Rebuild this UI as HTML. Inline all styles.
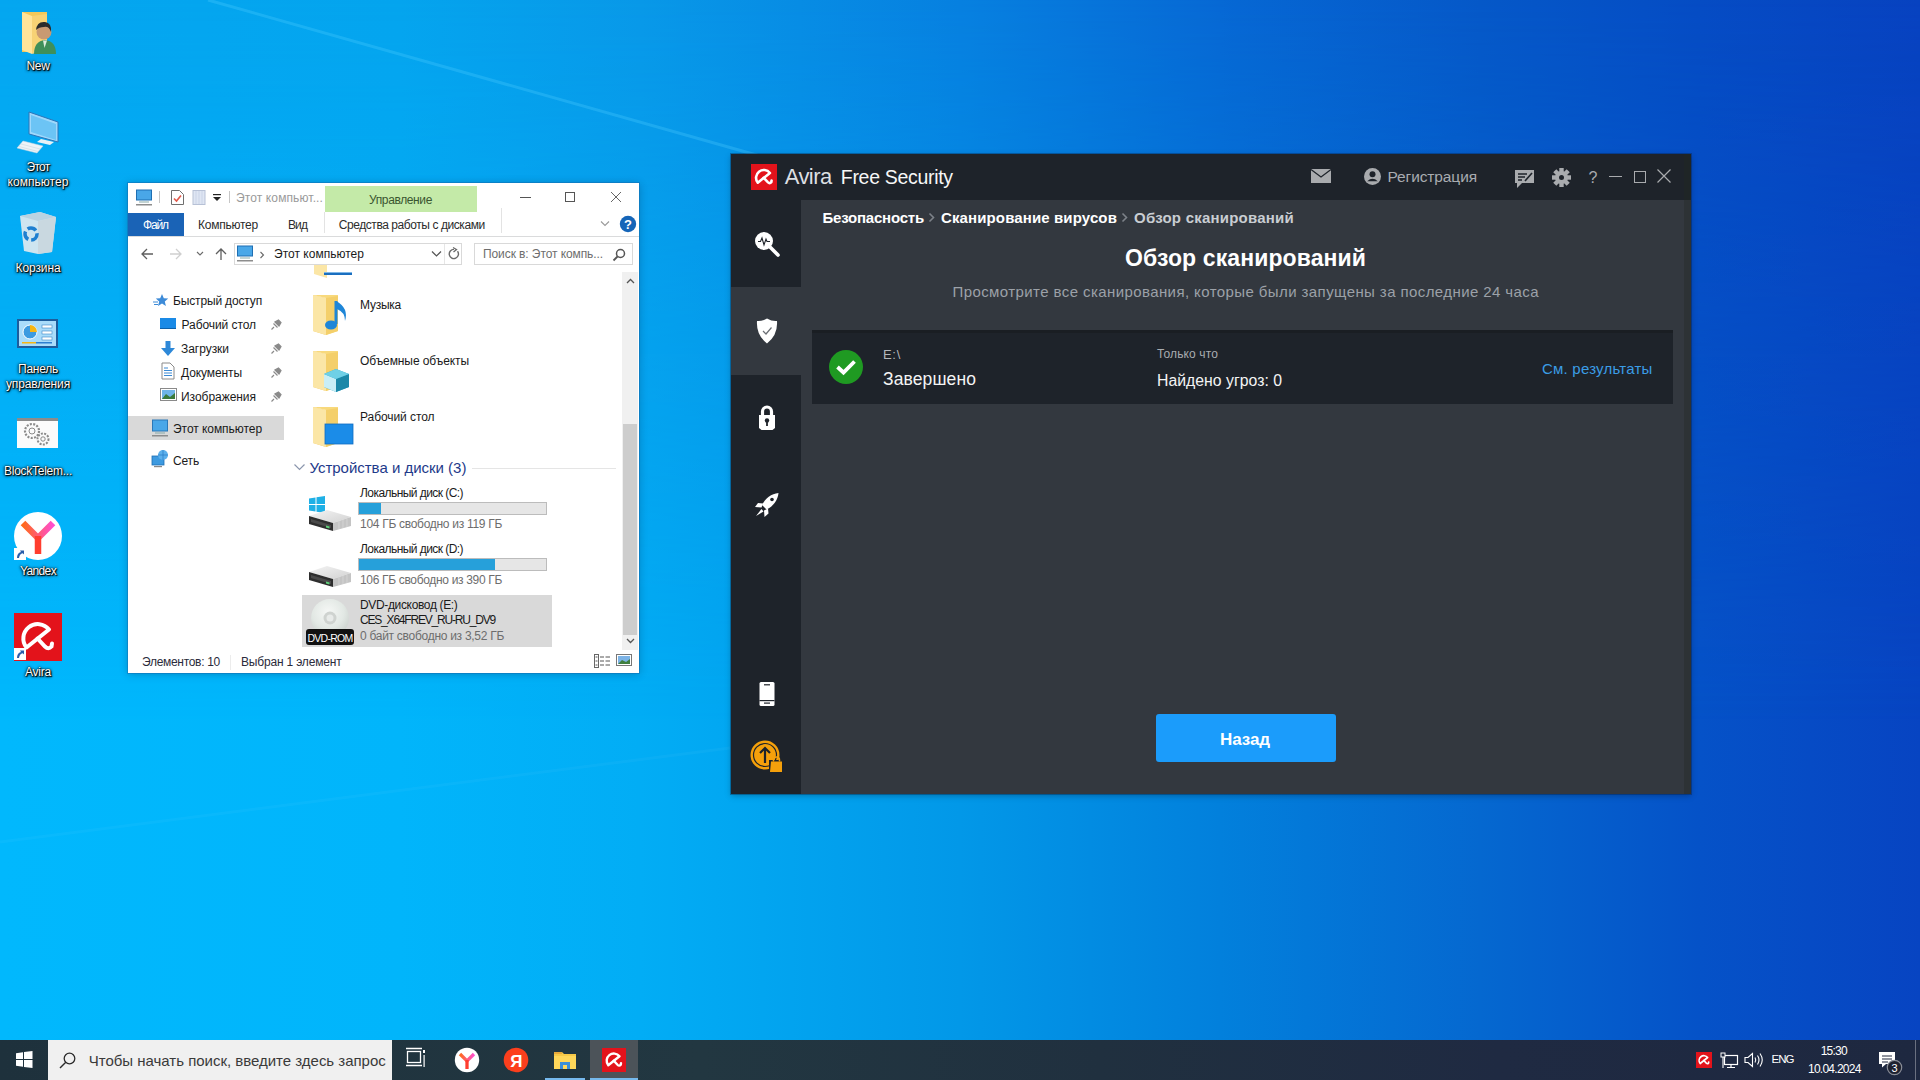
<!DOCTYPE html>
<html><head><meta charset="utf-8">
<style>
*{margin:0;padding:0;box-sizing:border-box}
html,body{width:1920px;height:1080px;overflow:hidden}
body{position:relative;font-family:"Liberation Sans",sans-serif;background:#03a8ef}
.a{position:absolute}
.t{position:absolute;white-space:pre;line-height:1;font-family:"Liberation Sans",sans-serif}
svg.a{overflow:visible}
#bg{left:0;top:0;width:1920px;height:1080px;
background:linear-gradient(90deg,#01b8fd 0px,#01b5fb 400px,#02adf5 640px,#0298e8 960px,#0280dc 1220px,#0568d0 1480px,#0552c8 1700px,#0744c2 1920px)}
#bgtop{left:0;top:0;width:1920px;height:1080px;
background:linear-gradient(90deg,#04a6f0 0px,#04a4ee 400px,#0898e8 640px,#0680e0 960px,#0668d4 1220px,#0558c8 1480px,#054cc4 1700px,#0742c0 1920px);
-webkit-mask-image:linear-gradient(180deg,#000 0px,rgba(0,0,0,.8) 140px,rgba(0,0,0,.3) 500px,rgba(0,0,0,0) 720px);mask-image:linear-gradient(180deg,#000 0px,rgba(0,0,0,.8) 140px,rgba(0,0,0,.3) 500px,rgba(0,0,0,0) 720px)}
</style></head><body>
<div id="bg" class="a"></div>
<div id="bgtop" class="a"></div>
<svg class="a" style="left:0;top:0" width="1920" height="1080"><line x1="208" y1="0" x2="760" y2="156" stroke="rgba(80,205,255,0.30)" stroke-width="3"/><line x1="0" y1="842" x2="730" y2="748" stroke="rgba(255,255,255,0.035)" stroke-width="3"/></svg>
<svg class="a" style="left:20px;top:10px;" width="40" height="46" viewBox="0 0 40 46">
<path d="M2 2 L27 2 L27 42 L2 42 Z" fill="#f3c85a"/>
<path d="M2 2 L12 6 L12 44 L2 40 Z" fill="#ffe49a"/>
<path d="M12 6 L27 4 L27 40 L12 44 Z" fill="#f7d275"/>
<path d="M14 44 Q14 31 25 30 Q36 31 36 44Z" fill="#3f8f5a"/>
<circle cx="24" cy="22" r="7.5" fill="#c99a72"/>
<path d="M16 20 Q17 11 25 12 Q32 13 31 22 Q29 16 24 17 Q19 17 16 20Z" fill="#2b2b2b"/>
<path d="M23 30.5 L24.5 38 L27 30.5Z" fill="#dfeee0"/>
</svg>
<div class="t" style="left:26.50px;top:60.00px;font-size:12px;color:#fff;letter-spacing:-0.339px;text-shadow:0 0 1px #000,1px 1px 1px #000,0 0 3px rgba(0,0,0,.8),0 1px 3px rgba(0,0,0,.8)">New</div>
<svg class="a" style="left:14px;top:110px;" width="48" height="46" viewBox="0 0 48 46">
<path d="M15 2 L44 12 L44 32 L15 24 Z" fill="#9fd8fb" stroke="#2c74b8" stroke-width="1"/>
<path d="M17 5 L42 14 L42 30 L17 22 Z" fill="#6cc4f5"/>
<path d="M27 29 L40 32 L36 35 L23 32 Z" fill="#e9f1f6"/>
<path d="M9 31 L29 36 L23 43 L3 38 Z" fill="#eef3f7" stroke="#c8d6e0" stroke-width=".5"/><path d="M7 34 L26 39 M5 36.5 L24 41.5" stroke="#c9d6df" stroke-width=".6"/>
</svg>
<div class="t" style="left:26.50px;top:161.00px;font-size:12px;color:#fff;letter-spacing:-0.727px;text-shadow:0 0 1px #000,1px 1px 1px #000,0 0 3px rgba(0,0,0,.8),0 1px 3px rgba(0,0,0,.8)">Этот</div>
<div class="t" style="left:7.50px;top:176.00px;font-size:12px;color:#fff;letter-spacing:0.054px;text-shadow:0 0 1px #000,1px 1px 1px #000,0 0 3px rgba(0,0,0,.8),0 1px 3px rgba(0,0,0,.8)">компьютер</div>
<svg class="a" style="left:18px;top:210px;" width="40" height="46" viewBox="0 0 40 46">
<path d="M2 6 L22 2 L38 7 L34 42 L20 44 L6 41 Z" fill="#dfe9ef" opacity=".92"/>
<path d="M2 6 L22 2 L38 7 L20 11 Z" fill="#b9d3e2"/>
<path d="M20 11 L38 7 L34 42 L20 44 Z" fill="#c9d8e0"/>
<circle cx="13" cy="24" r="6" fill="none" stroke="#1e7fd0" stroke-width="3.5" stroke-dasharray="9 3"/>
</svg>
<div class="t" style="left:15.50px;top:262.00px;font-size:12px;color:#fff;letter-spacing:-0.103px;text-shadow:0 0 1px #000,1px 1px 1px #000,0 0 3px rgba(0,0,0,.8),0 1px 3px rgba(0,0,0,.8)">Корзина</div>
<svg class="a" style="left:16px;top:318px;" width="44" height="32" viewBox="0 0 44 32">
<rect x="1" y="1" width="41" height="29" fill="#1d5d9c"/>
<rect x="3" y="3" width="37" height="25" fill="#a9dcfa"/>
<circle cx="14" cy="14" r="7" fill="#3c9be0" stroke="#fff" stroke-width="1"/>
<path d="M14 7 A7 7 0 0 1 21 14 L14 14Z" fill="#f6b614"/>
<rect x="26" y="7" width="10" height="3" fill="#fff" stroke="#3b86c6" stroke-width=".6"/>
<rect x="26" y="13" width="10" height="3" fill="#fff" stroke="#3b86c6" stroke-width=".6"/>
<rect x="26" y="19" width="10" height="3" fill="#fff" stroke="#3b86c6" stroke-width=".6"/>
<rect x="6" y="24" width="14" height="1.5" fill="#f6b614"/><rect x="20" y="24" width="16" height="1.5" fill="#2d7fd0"/>
</svg>
<div class="t" style="left:18.00px;top:363.00px;font-size:12px;color:#fff;letter-spacing:-0.245px;text-shadow:0 0 1px #000,1px 1px 1px #000,0 0 3px rgba(0,0,0,.8),0 1px 3px rgba(0,0,0,.8)">Панель</div>
<div class="t" style="left:6.00px;top:378.00px;font-size:12px;color:#fff;letter-spacing:-0.145px;text-shadow:0 0 1px #000,1px 1px 1px #000,0 0 3px rgba(0,0,0,.8),0 1px 3px rgba(0,0,0,.8)">управления</div>
<svg class="a" style="left:16px;top:418px;" width="43" height="31" viewBox="0 0 43 31">
<rect x="1" y="0" width="41" height="30" fill="#fbfbfb"/>
<rect x="1" y="0" width="41" height="3" fill="#8c8c8c"/>
<circle cx="16" cy="13" r="7" fill="none" stroke="#8a8a8a" stroke-width="2.2" stroke-dasharray="2 1.4"/>
<circle cx="16" cy="13" r="3" fill="none" stroke="#8a8a8a" stroke-width="1"/>
<circle cx="27" cy="21" r="5.5" fill="none" stroke="#8a8a8a" stroke-width="2" stroke-dasharray="2 1.3"/>
<circle cx="27" cy="21" r="2.2" fill="none" stroke="#8a8a8a" stroke-width="1"/>
</svg>
<div class="t" style="left:4.00px;top:465.00px;font-size:12px;color:#fff;letter-spacing:-0.258px;text-shadow:0 0 1px #000,1px 1px 1px #000,0 0 3px rgba(0,0,0,.8),0 1px 3px rgba(0,0,0,.8)">BlockTelem...</div>
<svg class="a" style="left:13px;top:511px;" width="50" height="50" viewBox="0 0 50 50">
<circle cx="25" cy="25" r="24" fill="#fff"/>
<defs><linearGradient id="yg" x1="0" x2="1"><stop offset="0" stop-color="#ff6a1a"/><stop offset="1" stop-color="#ff4fd0"/></linearGradient></defs>
<path d="M10 12 L25 27 L40 12" fill="none" stroke="url(#yg)" stroke-width="6.5" stroke-linecap="butt"/>
<path d="M25 25 L25 43" stroke="#ff3d2e" stroke-width="6.5"/>
</svg>
<svg class="a" style="left:14px;top:548px;" width="12" height="12" viewBox="0 0 12 12"><rect x="0" y="0" width="12" height="12" fill="#fff"/><path d="M3 10 Q3 5 7 4 L6 2.5 L10 2.5 L10 6.5 L8.7 5.2 Q5.5 6 5 10Z" fill="#2a5daa"/></svg>
<div class="t" style="left:20.00px;top:565.00px;font-size:12px;color:#fff;letter-spacing:-0.635px;text-shadow:0 0 1px #000,1px 1px 1px #000,0 0 3px rgba(0,0,0,.8),0 1px 3px rgba(0,0,0,.8)">Yandex</div>
<svg class="a" style="left:14px;top:613px;" width="48" height="48" viewBox="0 0 48 48"><rect width="48" height="48" fill="#e3131b"/>
<path d="M12.5 34.5 A14.3 14.3 0 0 1 35 16.5 Z" fill="none" stroke="#fff" stroke-width="4.00" stroke-linejoin="round"/>
<path d="M23.5 25.5 L31 33.5 Q34.5 37 37.5 33.5 L38 30.5" fill="none" stroke="#fff" stroke-width="4.00" stroke-linecap="round"/>
</svg>
<svg class="a" style="left:14px;top:648px;" width="12" height="12" viewBox="0 0 12 12"><rect x="0" y="0" width="12" height="12" fill="#fff"/><path d="M3 10 Q3 5 7 4 L6 2.5 L10 2.5 L10 6.5 L8.7 5.2 Q5.5 6 5 10Z" fill="#2a5daa"/></svg>
<div class="t" style="left:25.00px;top:666.00px;font-size:12px;color:#fff;letter-spacing:-0.225px;text-shadow:0 0 1px #000,1px 1px 1px #000,0 0 3px rgba(0,0,0,.8),0 1px 3px rgba(0,0,0,.8)">Avira</div>
<div class="a" style="left:128px;top:183px;width:511px;height:490px;background:#fff;box-shadow:0 1px 8px rgba(0,30,60,.3);outline:1px solid rgba(20,110,180,.5)"></div>
<svg class="a" style="left:136px;top:189px;" width="17" height="17" viewBox="0 0 17 17"><rect x="0.5" y="1" width="15" height="10" fill="#49a7e8" stroke="#1f6fb3" stroke-width="1"/><rect x="3" y="12.5" width="10" height="1" fill="#8aa"/><rect x="0" y="15" width="16" height="1.5" fill="#8d8d8d"/></svg>
<div class="a" style="left:159px;top:191px;width:1px;height:12px;background:#c6c6c6;"></div>
<svg class="a" style="left:170px;top:189px;" width="15" height="17" viewBox="0 0 15 17"><path d="M1.5 1.5 H9.5 L13.5 5.5 V15.5 H1.5Z" fill="#fff" stroke="#6f6f6f" stroke-width="1"/><path d="M4 9.5 L6.5 12 L11 6.5" fill="none" stroke="#e0584a" stroke-width="1.6"/></svg>
<svg class="a" style="left:192px;top:189px;" width="15" height="17" viewBox="0 0 15 17"><rect x="1" y="1.5" width="12" height="14" fill="#dfe6f3" stroke="#b7c1d6" stroke-width="1"/><path d="M4 2 V15 M7 2 V15 M10 2 V15" stroke="#c5cfe3" stroke-width=".8"/></svg>
<svg class="a" style="left:212px;top:193px;" width="10" height="10" viewBox="0 0 10 10"><rect x="1" y="1" width="8" height="1.2" fill="#222"/><path d="M1 4 H9 L5 8Z" fill="#222"/></svg>
<div class="a" style="left:229px;top:191px;width:1px;height:12px;background:#c6c6c6;"></div>
<div class="t" style="left:236.00px;top:192.00px;font-size:12px;color:#9a9a9a;letter-spacing:0.120px">Этот компьют...</div>
<div class="a" style="left:325px;top:186px;width:152px;height:26px;background:#c4eaa8;"></div>
<div class="t" style="left:369.00px;top:194.00px;font-size:12px;color:#3a5530;letter-spacing:-0.372px">Управление</div>
<div class="a" style="left:520px;top:197px;width:11px;height:1px;background:#555;"></div>
<div class="a" style="left:565px;top:192px;width:10px;height:10px;background:transparent;border:1px solid #555"></div>
<svg class="a" style="left:610px;top:191px;" width="12" height="12" viewBox="0 0 12 12"><path d="M1 1 L11 11 M11 1 L1 11" stroke="#666" stroke-width="1"/></svg>
<div class="a" style="left:128px;top:213px;width:56px;height:23px;background:#1a63b6;"></div>
<div class="t" style="left:143.00px;top:219.00px;font-size:12px;color:#fff;letter-spacing:-1.129px">Файл</div>
<div class="t" style="left:198.00px;top:219.00px;font-size:12px;color:#2c2c2c;letter-spacing:-0.234px">Компьютер</div>
<div class="t" style="left:288.00px;top:219.00px;font-size:12px;color:#2c2c2c;letter-spacing:-0.906px">Вид</div>
<div class="a" style="left:324px;top:212px;width:1px;height:21px;background:#e3e3e3;"></div>
<div class="t" style="left:338.75px;top:219.00px;font-size:12px;color:#2c2c2c;letter-spacing:-0.431px">Средства работы с дисками</div>
<div class="a" style="left:501px;top:208px;width:1px;height:25px;background:#e3e3e3;"></div>
<svg class="a" style="left:600px;top:220px;" width="10" height="7" viewBox="0 0 10 7"><path d="M1 1.5 L5 5.5 L9 1.5" fill="none" stroke="#9a9a9a" stroke-width="1.1"/></svg>
<svg class="a" style="left:619px;top:215px;" width="18" height="18" viewBox="0 0 18 18"><circle cx="9" cy="9" r="8.2" fill="#1565b8"/><text x="9" y="13.6" font-family="Liberation Sans" font-weight="bold" font-size="13" fill="#fff" text-anchor="middle">?</text></svg>
<div class="a" style="left:128px;top:236px;width:511px;height:1px;background:#dadbdc;"></div>
<svg class="a" style="left:140px;top:247px;" width="15" height="14" viewBox="0 0 15 14"><path d="M13 7 H2 M7 2 L2 7 L7 12" fill="none" stroke="#5f5f5f" stroke-width="1.3"/></svg>
<svg class="a" style="left:168px;top:247px;" width="15" height="14" viewBox="0 0 15 14"><path d="M2 7 H13 M8 2 L13 7 L8 12" fill="none" stroke="#cfcfcf" stroke-width="1.3"/></svg>
<svg class="a" style="left:196px;top:251px;" width="8" height="6" viewBox="0 0 8 6"><path d="M1 1 L4 4 L7 1" fill="none" stroke="#6a6a6a" stroke-width="1.1"/></svg>
<svg class="a" style="left:214px;top:247px;" width="14" height="14" viewBox="0 0 14 14"><path d="M7 13 V2 M2 7 L7 2 L12 7" fill="none" stroke="#5f5f5f" stroke-width="1.3"/></svg>
<div class="a" style="left:234px;top:243px;width:228px;height:22px;background:#fff;border:1px solid #d9d9d9"></div>
<div class="a" style="left:444px;top:244px;width:1px;height:20px;background:#e6e6e6;"></div>
<svg class="a" style="left:237px;top:245px;" width="17" height="17" viewBox="0 0 17 17"><rect x="0.5" y="1" width="15" height="10" fill="#49a7e8" stroke="#1f6fb3" stroke-width="1"/><rect x="3" y="12.5" width="10" height="1" fill="#8aa"/><rect x="0" y="15" width="16" height="1.5" fill="#8d8d8d"/></svg>
<svg class="a" style="left:259px;top:251px;" width="7" height="8" viewBox="0 0 7 8"><path d="M1.5 1 L4.5 4 L1.5 7" fill="none" stroke="#6a6a6a" stroke-width="1.1"/></svg>
<div class="t" style="left:274.00px;top:248.00px;font-size:12px;color:#1a1a1a;letter-spacing:0.019px">Этот компьютер</div>
<svg class="a" style="left:431px;top:250px;" width="11" height="8" viewBox="0 0 11 8"><path d="M1 1.5 L5.5 6 L10 1.5" fill="none" stroke="#555" stroke-width="1.2"/></svg>
<svg class="a" style="left:447px;top:247px;" width="14" height="14" viewBox="0 0 14 14"><path d="M10.5 4.2 A4.6 4.6 0 1 1 7 2.4" fill="none" stroke="#6a6a6a" stroke-width="1.4"/><path d="M6 0.5 L9.5 2.5 L6.5 5" fill="none" stroke="#6a6a6a" stroke-width="1.3"/></svg>
<div class="a" style="left:474px;top:243px;width:159px;height:22px;background:#fff;border:1px solid #d9d9d9"></div>
<div class="t" style="left:483.00px;top:248.00px;font-size:12px;color:#6d6d6d;letter-spacing:-0.087px">Поиск в: Этот компь...</div>
<svg class="a" style="left:612px;top:248px;" width="14" height="14" viewBox="0 0 14 14"><circle cx="8.5" cy="5.5" r="4" fill="none" stroke="#555" stroke-width="1.5"/><path d="M5.5 8.5 L1.5 12.5" stroke="#555" stroke-width="1.8"/></svg>
<svg class="a" style="left:153px;top:293px;" width="16" height="14" viewBox="0 0 16 14"><path d="M9 1 L10.8 5.3 L15.2 5.6 L11.8 8.5 L12.9 13 L9 10.5 L5 13 L6.2 8.5 L2.8 5.6 L7.2 5.3Z" fill="#3d8bd8"/><path d="M0 9 H5 M1 11.5 H5" stroke="#3d8bd8" stroke-width="1"/></svg>
<div class="t" style="left:173.00px;top:295.00px;font-size:12px;color:#1a1a1a;letter-spacing:-0.153px">Быстрый доступ</div>
<svg class="a" style="left:160px;top:318px;" width="17" height="12" viewBox="0 0 17 12"><rect x="0" y="0" width="16" height="11" fill="#1a8ae6"/><rect x="0" y="10" width="16" height="1" fill="#0d5fa8"/></svg>
<div class="t" style="left:181.50px;top:319.00px;font-size:12px;color:#1a1a1a;letter-spacing:-0.069px">Рабочий стол</div>
<svg class="a" style="left:160px;top:341px;" width="17" height="16" viewBox="0 0 17 16"><path d="M5.5 0 H10.5 V7 H15 L8 15 L1 7 H5.5Z" fill="#2d88d8"/></svg>
<div class="t" style="left:181.00px;top:343.00px;font-size:12px;color:#1a1a1a;letter-spacing:-0.037px">Загрузки</div>
<svg class="a" style="left:161px;top:362px;" width="14" height="18" viewBox="0 0 14 18"><path d="M1 1 H9 L13 5 V17 H1Z" fill="#fff" stroke="#8a8a8a" stroke-width="1"/><path d="M3 6 H7 M3 8.5 H11 M3 11 H11 M3 13.5 H11" stroke="#3c8ad4" stroke-width="1"/></svg>
<div class="t" style="left:181.00px;top:367.00px;font-size:12px;color:#1a1a1a;letter-spacing:-0.095px">Документы</div>
<svg class="a" style="left:160px;top:388px;" width="17" height="14" viewBox="0 0 17 14"><rect x="0.5" y="0.5" width="16" height="12" fill="#fff" stroke="#8a8a8a" stroke-width="1"/><rect x="2" y="2" width="13" height="9" fill="#6fb4e8"/><path d="M2 11 L6 6 L10 9 L15 5 V11Z" fill="#3b7a3b"/></svg>
<div class="t" style="left:181.00px;top:391.00px;font-size:12px;color:#1a1a1a;letter-spacing:-0.038px">Изображения</div>
<svg class="a" style="left:271px;top:318px;" width="12" height="12" viewBox="0 0 12 12"><path d="M3 9 L0.5 11.5 M2.5 5.5 L6.5 9.5 M4 4 L8 8 L10 4.5 L7.5 2Z" fill="#8a8a8a" stroke="#8a8a8a" stroke-width="1.2"/></svg>
<svg class="a" style="left:271px;top:342px;" width="12" height="12" viewBox="0 0 12 12"><path d="M3 9 L0.5 11.5 M2.5 5.5 L6.5 9.5 M4 4 L8 8 L10 4.5 L7.5 2Z" fill="#8a8a8a" stroke="#8a8a8a" stroke-width="1.2"/></svg>
<svg class="a" style="left:271px;top:366px;" width="12" height="12" viewBox="0 0 12 12"><path d="M3 9 L0.5 11.5 M2.5 5.5 L6.5 9.5 M4 4 L8 8 L10 4.5 L7.5 2Z" fill="#8a8a8a" stroke="#8a8a8a" stroke-width="1.2"/></svg>
<svg class="a" style="left:271px;top:390px;" width="12" height="12" viewBox="0 0 12 12"><path d="M3 9 L0.5 11.5 M2.5 5.5 L6.5 9.5 M4 4 L8 8 L10 4.5 L7.5 2Z" fill="#8a8a8a" stroke="#8a8a8a" stroke-width="1.2"/></svg>
<div class="a" style="left:128px;top:416px;width:156px;height:24px;background:#d9d9d9;"></div>
<svg class="a" style="left:152px;top:419px;" width="17" height="18" viewBox="0 0 17 18"><rect x="0.5" y="1" width="15" height="11" fill="#49a7e8" stroke="#2b78b8" stroke-width="1"/><rect x="3" y="13.5" width="10" height="1" fill="#8aa"/><rect x="0" y="16" width="16" height="1.5" fill="#8d8d8d"/></svg>
<div class="t" style="left:173.00px;top:423.00px;font-size:12px;color:#1a1a1a;letter-spacing:-0.052px">Этот компьютер</div>
<svg class="a" style="left:151px;top:449px;" width="18" height="19" viewBox="0 0 18 19"><rect x="1" y="7" width="12" height="9" fill="#3d9ae0" stroke="#1f6fb3" stroke-width=".8"/><circle cx="12" cy="6" r="5" fill="#5bb0ec"/><path d="M7 6 H17 M12 1 V11" stroke="#2a7cc6" stroke-width=".7"/><rect x="3" y="17" width="8" height="1.2" fill="#888"/></svg>
<div class="t" style="left:173.00px;top:455.00px;font-size:12px;color:#1a1a1a;letter-spacing:-0.176px">Сеть</div>
<svg class="a" style="left:313px;top:265px;" width="42" height="14" viewBox="0 0 42 14"><path d="M1 0 L14 0 L14 13 L1 9Z" fill="#fbe6a6"/><rect x="11" y="7" width="28" height="3" fill="#1a6fc0"/><rect x="11" y="7" width="28" height="1" fill="#7fb7e6"/></svg>
<svg class="a" style="left:312px;top:294px;" width="42" height="42" viewBox="0 0 42 42"><path d="M1 1 L14 4 L14 41 L1 37Z" fill="#f2cb63"/>
<path d="M1 1 H26 V37 L14 41 L14 4Z" fill="#f8d97c"/>
<path d="M14 4 L26 2 V37 L14 41Z" fill="#f4cf6a"/>
<path d="M1 1 L14 4 L14 41 L1 37Z" fill="#fbe6a6"/><path d="M24 7 V30" stroke="#1e86d8" stroke-width="3"/><ellipse cx="19" cy="31" rx="6" ry="4.5" fill="#1e86d8"/><path d="M24 7 Q37 14 33 27 Q33 18 25 15" fill="#1e86d8"/></svg>
<div class="t" style="left:360.00px;top:299.00px;font-size:12px;color:#1a1a1a;letter-spacing:-0.242px">Музыка</div>
<svg class="a" style="left:312px;top:350px;" width="42" height="42" viewBox="0 0 42 42"><path d="M1 1 L14 4 L14 41 L1 37Z" fill="#f2cb63"/>
<path d="M1 1 H26 V37 L14 41 L14 4Z" fill="#f8d97c"/>
<path d="M14 4 L26 2 V37 L14 41Z" fill="#f4cf6a"/>
<path d="M1 1 L14 4 L14 41 L1 37Z" fill="#fbe6a6"/><path d="M12 24 L24 19 L37 24 L37 37 L24 42 L12 37Z" fill="#2ea7c9"/><path d="M12 24 L24 29 L24 42 L12 37Z" fill="#c9eef6"/><path d="M24 29 L37 24 L37 37 L24 42Z" fill="#1c88a8"/><path d="M12 24 L24 19 L37 24 L24 29Z" fill="#6fd0e6"/></svg>
<div class="t" style="left:360.00px;top:355.00px;font-size:12px;color:#1a1a1a;letter-spacing:-0.083px">Объемные объекты</div>
<svg class="a" style="left:312px;top:406px;" width="42" height="42" viewBox="0 0 42 42"><path d="M1 1 L14 4 L14 41 L1 37Z" fill="#f2cb63"/>
<path d="M1 1 H26 V37 L14 41 L14 4Z" fill="#f8d97c"/>
<path d="M14 4 L26 2 V37 L14 41Z" fill="#f4cf6a"/>
<path d="M1 1 L14 4 L14 41 L1 37Z" fill="#fbe6a6"/><rect x="13" y="18" width="28" height="20" fill="#1b8ce8"/><rect x="13" y="18" width="28" height="20" fill="none" stroke="#0f6cc0" stroke-width=".8"/></svg>
<div class="t" style="left:360.00px;top:411.00px;font-size:12px;color:#1a1a1a;letter-spacing:-0.069px">Рабочий стол</div>
<svg class="a" style="left:293px;top:463px;" width="13" height="9" viewBox="0 0 13 9"><path d="M1.5 1.5 L6.5 6.5 L11.5 1.5" fill="none" stroke="#8b96ad" stroke-width="1.2"/></svg>
<div class="t" style="left:309.40px;top:460.00px;font-size:15px;color:#1e3a8a;letter-spacing:-0.012px">Устройства и диски (3)</div>
<div class="a" style="left:472px;top:468px;width:144px;height:1px;background:#e5e5e5;"></div>
<svg class="a" style="left:308px;top:496px;" width="18" height="18" viewBox="0 0 18 18"><path d="M1 2.5 L7.5 1.5 V8 H1Z M8.5 1.3 L17 0 V8 H8.5Z M1 9 H7.5 V15.5 L1 14.5Z M8.5 9 H17 V17 L8.5 15.7Z" fill="#1fb0e6"/></svg>
<svg class="a" style="left:308px;top:507px;" width="44" height="26" viewBox="0 0 44 26"><defs><linearGradient id="dtop507" x1="0" y1="0" x2="1" y2="1"><stop offset="0" stop-color="#f4f4f4"/><stop offset="1" stop-color="#d2d2d2"/></linearGradient></defs>
<path d="M1 9 L19 3 L43 10 L25 16Z" fill="url(#dtop507)"/>
<path d="M1 9 L25 16 L25 24 L1 17Z" fill="#2e2e2e"/>
<path d="M3 12 L23 18 L23 21 L3 15Z" fill="#4a4a4a"/>
<path d="M25 16 L43 10 L43 19 L25 24Z" fill="#c4c4c4"/>
<path d="M31 14 V22 M35 13 V21 M39 12 V20" stroke="#d8d8d8" stroke-width=".8"/>
<path d="M18 18.5 L21.5 19.5 L21.5 21.5 L18 20.5Z" fill="#5fd17a"/></svg>
<div class="t" style="left:360.00px;top:487.00px;font-size:12px;color:#1a1a1a;letter-spacing:-0.556px">Локальный диск (C:)</div>
<div class="a" style="left:358px;top:502px;width:189px;height:13px;background:#e6e6e6;box-shadow:inset 0 0 0 1px #bcbcbc"></div>
<div class="a" style="left:359px;top:503px;width:22px;height:11px;background:#26a0da;"></div>
<div class="t" style="left:360.00px;top:518.00px;font-size:12px;color:#6d6d6d;letter-spacing:-0.291px">104 ГБ свободно из 119 ГБ</div>
<svg class="a" style="left:308px;top:563px;" width="44" height="26" viewBox="0 0 44 26"><defs><linearGradient id="dtop563" x1="0" y1="0" x2="1" y2="1"><stop offset="0" stop-color="#f4f4f4"/><stop offset="1" stop-color="#d2d2d2"/></linearGradient></defs>
<path d="M1 9 L19 3 L43 10 L25 16Z" fill="url(#dtop563)"/>
<path d="M1 9 L25 16 L25 24 L1 17Z" fill="#2e2e2e"/>
<path d="M3 12 L23 18 L23 21 L3 15Z" fill="#4a4a4a"/>
<path d="M25 16 L43 10 L43 19 L25 24Z" fill="#c4c4c4"/>
<path d="M31 14 V22 M35 13 V21 M39 12 V20" stroke="#d8d8d8" stroke-width=".8"/>
<path d="M18 18.5 L21.5 19.5 L21.5 21.5 L18 20.5Z" fill="#5fd17a"/></svg>
<div class="t" style="left:360.00px;top:543.00px;font-size:12px;color:#1a1a1a;letter-spacing:-0.556px">Локальный диск (D:)</div>
<div class="a" style="left:358px;top:558px;width:189px;height:13px;background:#e6e6e6;box-shadow:inset 0 0 0 1px #bcbcbc"></div>
<div class="a" style="left:359px;top:559px;width:136px;height:11px;background:#26a0da;"></div>
<div class="t" style="left:360.00px;top:574.00px;font-size:12px;color:#6d6d6d;letter-spacing:-0.327px">106 ГБ свободно из 390 ГБ</div>
<div class="a" style="left:302px;top:595px;width:250px;height:52px;background:#d9d9d9;"></div>
<svg class="a" style="left:308px;top:598px;" width="46" height="40" viewBox="0 0 46 40"><defs><radialGradient id="dvd" cx=".45" cy=".35" r=".7"><stop offset="0" stop-color="#f6f8f6"/><stop offset=".6" stop-color="#e2e8e4"/><stop offset="1" stop-color="#c9cfcb"/></radialGradient></defs><circle cx="22" cy="20" r="19" fill="url(#dvd)"/><circle cx="22" cy="20" r="6.5" fill="#cfd3d0"/><circle cx="22" cy="20" r="3.5" fill="#e8ebe9"/></svg>
<div class="a" style="left:306px;top:629px;width:48px;height:16px;background:#111;border-radius:3px"></div>
<div class="t" style="left:307.50px;top:633.00px;font-size:10.5px;color:#fff;letter-spacing:-0.739px">DVD-ROM</div>
<div class="t" style="left:360.00px;top:599.00px;font-size:12px;color:#1a1a1a;letter-spacing:-0.348px">DVD-дисковод (E:)</div>
<div class="t" style="left:360.00px;top:614.00px;font-size:12px;color:#1a1a1a;letter-spacing:-1.193px">CES_X64FREV_RU-RU_DV9</div>
<div class="t" style="left:360.00px;top:630.00px;font-size:12px;color:#6d6d6d;letter-spacing:-0.279px">0 байт свободно из 3,52 ГБ</div>
<div class="a" style="left:622px;top:272px;width:16px;height:378px;background:#f0f0f0;"></div>
<svg class="a" style="left:626px;top:278px;" width="9" height="6" viewBox="0 0 9 6"><path d="M1 5 L4.5 1.5 L8 5" fill="none" stroke="#555" stroke-width="1.3"/></svg>
<div class="a" style="left:623px;top:424px;width:14px;height:211px;background:#cdcdcd;"></div>
<svg class="a" style="left:626px;top:638px;" width="9" height="6" viewBox="0 0 9 6"><path d="M1 1 L4.5 4.5 L8 1" fill="none" stroke="#555" stroke-width="1.3"/></svg>
<div class="t" style="left:142.00px;top:656.00px;font-size:12px;color:#2b2b3b;letter-spacing:-0.299px">Элементов: 10</div>
<div class="a" style="left:230px;top:655px;width:1px;height:15px;background:#ececec;"></div>
<div class="t" style="left:241.00px;top:656.00px;font-size:12px;color:#2b2b3b;letter-spacing:-0.182px">Выбран 1 элемент</div>
<svg class="a" style="left:593px;top:654px;" width="18" height="14" viewBox="0 0 18 14"><rect x="1.5" y="0.5" width="4" height="13" fill="none" stroke="#666" stroke-width="1"/><path d="M2.5 3 H4.5 M2.5 7 H4.5 M2.5 11 H4.5 M7 3 H11 M12.5 3 H17 M7 7 H11 M12.5 7 H17 M7 11 H11 M12.5 11 H17" stroke="#555" stroke-width="1"/></svg>
<svg class="a" style="left:616px;top:654px;" width="16" height="13" viewBox="0 0 16 13"><rect x="0.5" y="0.5" width="15" height="11" fill="#fff" stroke="#777" stroke-width="1"/><rect x="2" y="2" width="12" height="8" fill="#7cb3e6"/><path d="M2 10 L6 6 L10 8 L14 5 V10Z" fill="#3f7f3f"/></svg>
<div class="a" style="left:731px;top:154px;width:960px;height:640px;background:#1e232a;box-shadow:0 0 0 1px rgba(10,30,60,.35),0 2px 6px rgba(0,0,0,.25)"></div>
<div class="a" style="left:801px;top:200px;width:890px;height:594px;background:#33383f;"></div>
<div class="a" style="left:1684px;top:200px;width:7px;height:594px;background:#2d3235;"></div>
<div class="a" style="left:1684px;top:154px;width:7px;height:46px;background:#1f2526;"></div>
<div class="a" style="left:731px;top:287px;width:70px;height:88px;background:#33383f;"></div>
<svg class="a" style="left:751px;top:164px;" width="26" height="26" viewBox="0 0 48 48"><rect width="48" height="48" fill="#e3131b"/>
<path d="M12.5 34.5 A14.3 14.3 0 0 1 35 16.5 Z" fill="none" stroke="#fff" stroke-width="4.80" stroke-linejoin="round"/>
<path d="M23.5 25.5 L31 33.5 Q34.5 37 37.5 33.5 L38 30.5" fill="none" stroke="#fff" stroke-width="4.80" stroke-linecap="round"/>
</svg>
<div class="t" style="left:784.70px;top:166.00px;font-size:22px;color:#dcdfe2;letter-spacing:-0.547px;font-weight:300">Avira</div>
<div class="t" style="left:840.80px;top:168.00px;font-size:19.5px;color:#f7f7f7;letter-spacing:-0.304px">Free Security</div>
<svg class="a" style="left:1310px;top:168px;" width="22" height="16" viewBox="0 0 22 16"><rect x="1" y="1" width="20" height="14" fill="#a9abae"/><path d="M1 1.5 L11 9 L21 1.5" fill="none" stroke="#1e232a" stroke-width="1.2"/></svg>
<svg class="a" style="left:1363px;top:167px;" width="19" height="19" viewBox="0 0 19 19"><circle cx="9.5" cy="9.5" r="8.5" fill="#a9abae"/><circle cx="9.5" cy="7.3" r="3" fill="#1e232a"/><path d="M4.2 14.2 Q9.5 9.5 14.8 14.2 Z" fill="#1e232a"/></svg>
<div class="t" style="left:1387.50px;top:169.00px;font-size:15.5px;color:#a9acb1;letter-spacing:-0.101px">Регистрация</div>
<svg class="a" style="left:1514px;top:169px;" width="21" height="20" viewBox="0 0 21 20"><path d="M1 1 H20 V14 H8 L3 19 V14 H1Z" fill="#a9abae"/><path d="M4 5 H13 M4 8 H11 M4 11 H8" stroke="#1e232a" stroke-width="1.3"/><path d="M11 12 L18 4" stroke="#1e232a" stroke-width="1.6"/></svg>
<svg class="a" style="left:1551px;top:167px;" width="21" height="21" viewBox="0 0 21 21"><g transform="translate(10.5 10.5)" fill="#a9abae"><circle r="6.5"/><rect x="-2.2" y="-9.5" width="4.4" height="5" transform="rotate(0)"/><rect x="-2.2" y="-9.5" width="4.4" height="5" transform="rotate(45)"/><rect x="-2.2" y="-9.5" width="4.4" height="5" transform="rotate(90)"/><rect x="-2.2" y="-9.5" width="4.4" height="5" transform="rotate(135)"/><rect x="-2.2" y="-9.5" width="4.4" height="5" transform="rotate(180)"/><rect x="-2.2" y="-9.5" width="4.4" height="5" transform="rotate(225)"/><rect x="-2.2" y="-9.5" width="4.4" height="5" transform="rotate(270)"/><rect x="-2.2" y="-9.5" width="4.4" height="5" transform="rotate(315)"/><circle r="2.5" fill="#1e232a"/></g></svg>
<div class="t" style="left:1588.50px;top:169.50px;font-size:16px;color:#a9abae">?</div>
<div class="a" style="left:1609px;top:176px;width:13px;height:1px;background:#a9abae;"></div>
<div class="a" style="left:1634px;top:171px;width:12px;height:12px;background:transparent;border:1.2px solid #a9abae"></div>
<svg class="a" style="left:1656px;top:168px;" width="16" height="16" viewBox="0 0 16 16"><path d="M1.5 1.5 L14.5 14.5 M14.5 1.5 L1.5 14.5" stroke="#a9abae" stroke-width="1.2"/></svg>
<svg class="a" style="left:753px;top:230px;" width="28" height="28" viewBox="0 0 28 28"><circle cx="11" cy="11" r="9" fill="#fff"/><path d="M17 17 L25 25" stroke="#fff" stroke-width="3.6" stroke-linecap="round"/><path d="M5 11.5 H7.5 L9 8 L11 15 L13 9 L14 11.5 H17" fill="none" stroke="#1e232a" stroke-width="1.1"/></svg>
<svg class="a" style="left:755px;top:317px;" width="24" height="28" viewBox="0 0 24 28"><path d="M12 1.5 Q17 4.5 22 4 Q23 18 12 26.5 Q1 18 2 4 Q7 4.5 12 1.5Z" fill="#fff"/><path d="M8 14 L11 17 L16.5 10.5" fill="none" stroke="#6b6f74" stroke-width="1.2"/></svg>
<svg class="a" style="left:757px;top:404px;" width="20" height="28" viewBox="0 0 20 28"><path d="M5.5 11 V7.5 A4.5 4.5 0 0 1 14.5 7.5 V11" fill="none" stroke="#fff" stroke-width="3.2"/><path d="M2 11 H18 V24 L15.5 26 H4.5 L2 24Z" fill="#fff"/><circle cx="10" cy="16.5" r="2.2" fill="#1e232a"/><rect x="9.1" y="17" width="1.8" height="5" fill="#1e232a"/></svg>
<svg class="a" style="left:754px;top:491px;" width="26" height="27" viewBox="0 0 26 27"><path d="M24.5 2 C17.5 2.5 11 7.5 8 14 L12.5 18.5 C19 15.5 24 9 24.5 2Z" fill="#fff"/><path d="M9 12.5 L4 12 L1 16 L7.5 16.5Z M14 17.5 L14.5 22.5 L10.5 26 L10 19.5Z" fill="#fff"/><path d="M7.5 18 L2 25 L9.5 20.5Z" fill="#fff"/><circle cx="18" cy="8.5" r="1.8" fill="#1e232a"/></svg>
<svg class="a" style="left:758px;top:681px;" width="18" height="26" viewBox="0 0 18 26"><rect x="1.5" y="1" width="15" height="24" rx="1.5" fill="#fff"/><rect x="6" y="3.2" width="6" height="1.2" fill="#1e232a"/><rect x="1.5" y="19" width="15" height="1.2" fill="#1e232a"/><rect x="6" y="21.5" width="6" height="1.2" fill="#1e232a"/></svg>
<svg class="a" style="left:749px;top:739px;" width="35" height="34" viewBox="0 0 35 34"><circle cx="16" cy="16" r="14.5" fill="#f5a00b"/><circle cx="16" cy="16" r="11.5" fill="none" stroke="#1e232a" stroke-width="1.2"/><path d="M16 24 V9 M11 14 L16 9 L21 14" fill="none" stroke="#1e232a" stroke-width="2.2"/><rect x="20" y="21" width="14" height="12" fill="#1e232a"/><path d="M22 22.5 H33 V33 H21Z" fill="#f5a00b"/><path d="M24.5 22.5 V21 A3 3 0 0 1 30.5 21 V22.5" fill="none" stroke="#f5a00b" stroke-width="1.5"/></svg>
<div class="t" style="left:822.50px;top:210.00px;font-size:15px;color:#ffffff;font-weight:700;letter-spacing:-0.214px">Безопасность</div>
<svg class="a" style="left:928px;top:212px;" width="8" height="11" viewBox="0 0 8 11"><path d="M1.5 1.5 L5.5 5.5 L1.5 9.5" fill="none" stroke="#7d8289" stroke-width="1.6"/></svg>
<div class="t" style="left:941.00px;top:210.00px;font-size:15px;color:#ffffff;font-weight:700;letter-spacing:0.122px">Сканирование вирусов</div>
<svg class="a" style="left:1121px;top:212px;" width="8" height="11" viewBox="0 0 8 11"><path d="M1.5 1.5 L5.5 5.5 L1.5 9.5" fill="none" stroke="#7d8289" stroke-width="1.6"/></svg>
<div class="t" style="left:1134.00px;top:210.00px;font-size:15px;color:#c9cdd2;font-weight:700;letter-spacing:0.223px">Обзор сканирований</div>
<div class="t" style="left:1125.00px;top:247.00px;font-size:23px;color:#ffffff;font-weight:700;letter-spacing:0.102px">Обзор сканирований</div>
<div class="t" style="left:952.50px;top:284.00px;font-size:15px;color:#9ca1a8;letter-spacing:0.412px">Просмотрите все сканирования, которые были запущены за последние 24 часа</div>
<div class="a" style="left:812px;top:330px;width:861px;height:74px;background:#1e232a;"></div>
<div class="a" style="left:812px;top:330px;width:861px;height:3px;background:#1a1e23;"></div>
<svg class="a" style="left:828px;top:349px;" width="36" height="36" viewBox="0 0 36 36"><circle cx="18" cy="18" r="17" fill="#1f9a22"/><path d="M9.5 18 L15.5 23.5 L26.5 12.5" fill="none" stroke="#fff" stroke-width="3.8"/></svg>
<div class="t" style="left:883.00px;top:348.00px;font-size:13px;color:#b3b7bb;letter-spacing:0.698px">E:\</div>
<div class="t" style="left:883.00px;top:371.00px;font-size:17.5px;color:#f4f4f4;letter-spacing:0.106px">Завершено</div>
<div class="t" style="left:1157.00px;top:348.00px;font-size:12px;color:#a8acb0;letter-spacing:0.125px">Только что</div>
<div class="t" style="left:1157.00px;top:373.00px;font-size:15.8px;color:#f4f4f4;letter-spacing:0.014px">Найдено угроз: 0</div>
<div class="t" style="left:1542.00px;top:361.00px;font-size:15px;color:#3b9de6;letter-spacing:0.223px">См. результаты</div>
<div class="a" style="left:1156px;top:714px;width:180px;height:48px;background:#1b9cfb;border-radius:3px"></div>
<div class="t" style="left:1220.00px;top:731.00px;font-size:17px;color:#ffffff;font-weight:700;letter-spacing:-0.084px">Назад</div>
<div class="a" style="left:0px;top:1040px;width:1920px;height:40px;background:linear-gradient(90deg,#1e313c 0px,#223741 700px,#20303f 1100px,#1f2a42 1500px,#1e2840 1920px);"></div>
<svg class="a" style="left:16px;top:1051px;" width="17" height="17" viewBox="0 0 17 17"><path d="M0 2.2 L7 1.3 V8 H0Z M8 1.1 L16.5 0 V8 H8Z M0 9 H7 V15.7 L0 14.8Z M8 9 H16.5 V17 L8 15.9Z" fill="#fff"/></svg>
<div class="a" style="left:48px;top:1040px;width:344px;height:40px;background:#f0f0f0;"></div>
<svg class="a" style="left:58px;top:1051px;" width="20" height="20" viewBox="0 0 20 20"><circle cx="11.5" cy="7.5" r="5.3" fill="none" stroke="#2b2b2b" stroke-width="1.3"/><path d="M7.8 11.2 L2 17" stroke="#2b2b2b" stroke-width="1.4"/></svg>
<div class="t" style="left:88.75px;top:1053.00px;font-size:15px;color:#3a3a3a;letter-spacing:-0.014px">Чтобы начать поиск, введите здесь запрос</div>
<svg class="a" style="left:406px;top:1047px;" width="20" height="21" viewBox="0 0 20 21"><rect x="1.5" y="4.5" width="13" height="11" fill="none" stroke="#fff" stroke-width="1.3"/><path d="M0 1.5 H16 M0 18.5 H16" stroke="#fff" stroke-width="1.3"/><rect x="17" y="3" width="2" height="3" fill="#fff"/><rect x="17.5" y="8" width="1.2" height="12" fill="#fff"/></svg>
<svg class="a" style="left:454px;top:1047px;" width="26" height="26" viewBox="0 0 26 26"><circle cx="13" cy="13" r="12.2" fill="#fff"/><path d="M6 7 L13 14 L20 7" fill="none" stroke="url(#yg)" stroke-width="3.3"/><path d="M13 13 L13 22" stroke="#ff3d2e" stroke-width="3.3"/></svg>
<svg class="a" style="left:503px;top:1047px;" width="26" height="26" viewBox="0 0 26 26"><circle cx="13" cy="13" r="12.3" fill="#fc3f1d"/><text x="13.3" y="19.5" font-family="Liberation Sans" font-weight="bold" font-size="17" fill="#fff" text-anchor="middle">Я</text></svg>
<svg class="a" style="left:553px;top:1049px;" width="24" height="22" viewBox="0 0 24 22"><path d="M1 3 H9 L11 5 H23 V20 H1Z" fill="#f7c948"/><rect x="1" y="7" width="22" height="13" fill="#ffd75a"/><rect x="7" y="13" width="10" height="7" fill="#3b8fd9"/><rect x="10" y="16" width="4" height="4" fill="#ffd75a"/><rect x="1" y="3" width="8" height="2" fill="#e8a93a"/></svg>
<div class="a" style="left:545px;top:1078px;width:40px;height:2px;background:#76b9ed;"></div>
<div class="a" style="left:590px;top:1040px;width:48px;height:40px;background:#4c5359;"></div>
<div class="a" style="left:590px;top:1078px;width:48px;height:2px;background:#76b9ed;"></div>
<svg class="a" style="left:602px;top:1048px;" width="24" height="24" viewBox="0 0 48 48"><rect width="48" height="48" fill="#e3131b"/>
<path d="M12.5 34.5 A14.3 14.3 0 0 1 35 16.5 Z" fill="none" stroke="#fff" stroke-width="4.80" stroke-linejoin="round"/>
<path d="M23.5 25.5 L31 33.5 Q34.5 37 37.5 33.5 L38 30.5" fill="none" stroke="#fff" stroke-width="4.80" stroke-linecap="round"/>
</svg>
<svg class="a" style="left:1696px;top:1052px;" width="16" height="16" viewBox="0 0 48 48"><rect width="48" height="48" fill="#e3131b"/>
<path d="M12.5 34.5 A14.3 14.3 0 0 1 35 16.5 Z" fill="none" stroke="#fff" stroke-width="5.00" stroke-linejoin="round"/>
<path d="M23.5 25.5 L31 33.5 Q34.5 37 37.5 33.5 L38 30.5" fill="none" stroke="#fff" stroke-width="5.00" stroke-linecap="round"/>
</svg>
<svg class="a" style="left:1720px;top:1052px;" width="19" height="17" viewBox="0 0 19 17"><rect x="4.5" y="3.5" width="13" height="9" fill="none" stroke="#fff" stroke-width="1.2"/><path d="M11 13 V15.5 M7 15.5 H15" stroke="#fff" stroke-width="1.2"/><rect x="1" y="1" width="4" height="4" fill="#20293f" stroke="#fff" stroke-width="1"/><path d="M3 5 V16" stroke="#fff" stroke-width="1.1"/></svg>
<svg class="a" style="left:1744px;top:1052px;" width="19" height="16" viewBox="0 0 19 16"><path d="M1 5.5 H4 L8.5 1.5 V14.5 L4 10.5 H1Z" fill="none" stroke="#fff" stroke-width="1.1"/><path d="M11 5.5 Q12.5 8 11 10.5 M13.5 3.5 Q16.5 8 13.5 12.5 M16 1.5 Q20.5 8 16 14.5" fill="none" stroke="#fff" stroke-width="1.1"/></svg>
<div class="t" style="left:1771.60px;top:1054.00px;font-size:11.5px;color:#ffffff;letter-spacing:-0.974px">ENG</div>
<div class="t" style="left:1820.75px;top:1045.00px;font-size:12px;color:#ffffff;letter-spacing:-0.806px">15:30</div>
<div class="t" style="left:1808.00px;top:1063.00px;font-size:12px;color:#ffffff;letter-spacing:-0.746px">10.04.2024</div>
<svg class="a" style="left:1877px;top:1050px;" width="27" height="28" viewBox="0 0 27 28"><path d="M2 2 H18 V14 H9 L5 17.5 V14 H2Z" fill="#fff"/><path d="M5 6 H15 M5 9 H15 M5 12 H11" stroke="#20293f" stroke-width="1.1"/><circle cx="17.5" cy="17.5" r="7.2" fill="#1e2230" stroke="#8a8e98" stroke-width="1.2"/><text x="17.6" y="21.6" font-family="Liberation Sans" font-size="11" fill="#fff" text-anchor="middle">3</text></svg>
<div class="a" style="left:1915px;top:1040px;width:1px;height:40px;background:#6a7080;"></div>
</body></html>
